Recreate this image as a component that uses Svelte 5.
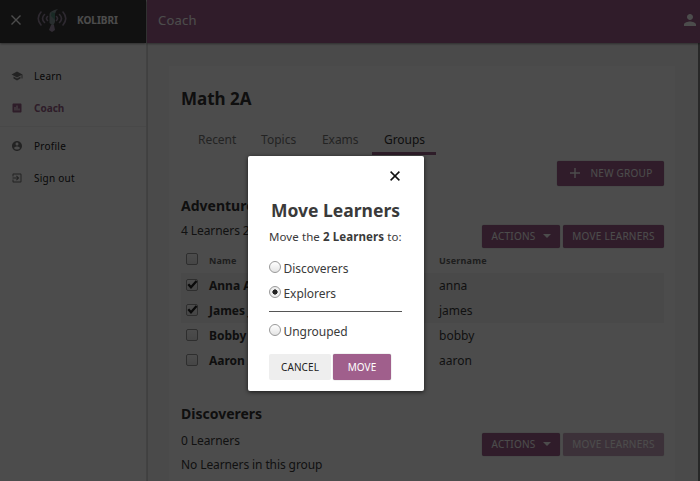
<script>
  const tabs = ['Recent', 'Topics', 'Exams', 'Groups'];
  const learners = [
    { name: 'Anna Adams', username: 'anna', checked: true },
    { name: 'James Jones', username: 'james', checked: true },
    { name: 'Bobby Brown', username: 'bobby', checked: false },
    { name: 'Aaron Allen', username: 'aaron', checked: false }
  ];
  const nav = [
    { label: 'Learn', icon: 'M5 13.18v4L12 21l7-3.82v-4L12 17l-7-3.82zM12 3L1 9l11 6 9-4.91V17h2V9L12 3z' },
    { label: 'Coach', active: true, icon: 'M19 3H5c-1.1 0-2 .9-2 2v14c0 1.1.9 2 2 2h14c1.1 0 2-.9 2-2V5c0-1.1-.9-2-2-2zM9 17H7v-7h2v7zm4 0h-2V7h2v10zm4 0h-2v-4h2v4z' },
    { label: 'Profile', icon: 'M12 2C6.48 2 2 6.48 2 12s4.48 10 10 10 10-4.48 10-10S17.520 2 12 2zm0 3c1.660 0 3 1.340 3 3s-1.340 3-3 3-3-1.340-3-3 1.340-3 3-3zm0 14.200c-2.500 0-4.710-1.280-6-3.220.030-1.990 4-3.080 6-3.080 1.990 0 5.970 1.090 6 3.080-1.290 1.940-3.500 3.220-6 3.220z' },
    { label: 'Sign out', icon: 'M10.090 15.590L11.500 17l5-5-5-5-1.410 1.410L12.670 11H3v2h9.670l-2.580 2.590zM19 3H5c-1.110 0-2 .9-2 2v4h2V5h14v14H5v-4H3v4c0 1.100.890 2 2 2h14c1.100 0 2-.9 2-2V5c0-1.100-.9-2-2-2z' }
  ];
  let target = $state('Explorers');
</script>

{#snippet checkbox(checked)}
  <span class="check">
    {#if checked}
      <svg width="12" height="12" viewBox="0 0 12 12"><path d="M2.300 5.200L5 8.300 10.600 2" fill="none" stroke="#222" stroke-width="2.300" /></svg>
    {/if}
  </span>
{/snippet}

{#snippet actions(disabled)}
  <div class="actions">
    <button class="btn act">ACTIONS<svg width="8" height="4" viewBox="0 0 8 4"><path d="M0 0h8L4 4z" fill="currentColor" /></svg></button>
    <button class="btn mv" class:disabled>MOVE LEARNERS</button>
  </div>
{/snippet}

{#snippet option(name)}
  <button class="option" onclick={() => (target = name)}>
    <span class="radio" class:on={target === name}></span><span class="label">{name}</span>
  </button>
{/snippet}

<div class="app">
  <aside>
    <div class="brand">
      <svg class="close" width="10" height="10" viewBox="0 0 10 10"><path d="M.5.5l9 9M9.500.5l-9 9" stroke="#fff" stroke-width="1.400" /></svg>
      <svg class="logo" width="30" height="24" viewBox="0 0 30 24">
        <g fill="none" stroke="#998aa2" stroke-width="1.600" stroke-linecap="round">
          <path d="M4 4Q-1.500 10.500 4 17M7.500 6.500Q3.500 10.500 7.500 14.500M10.500 8.500Q8.500 10.500 10.500 12.500" />
          <path d="M26 4q5.500 6.500 0 13M22.500 6.500q4 4 0 8M19.500 8.500q2 2 0 4" />
        </g>
        <path d="M12.500 6Q13 3 21 1Q18 3 18 6L18 14L16 18L12.500 15Z" fill="#8a9a9d" />
        <path d="M14.500 4L18 5V12L14 8Z" fill="#568e7c" />
        <path d="M14 17h3l1 5-3 2-3-2z" fill="#a694ae" />
      </svg>
      <span>KOLIBRI</span>
    </div>
    <nav>
      {#each nav as item, i}
        {#if i === 2}<hr />{/if}
        <div class="item" class:active={item.active}>
          <svg width="12" height="12" viewBox="0 0 24 24"><path d={item.icon} fill="currentColor" fill-rule="evenodd" /></svg>
          <span>{item.label}</span>
        </div>
      {/each}
    </nav>
  </aside>

  <div class="main">
    <header>
      <span>Coach</span>
      <svg width="18" height="18" viewBox="0 0 24 24"><path d="M12 12c2.210 0 4-1.790 4-4s-1.790-4-4-4-4 1.790-4 4 1.790 4 4 4zm0 2c-2.670 0-8 1.340-8 4v2h16v-2c0-2.660-5.330-4-8-4z" fill="#fff" /></svg>
    </header>
    <div class="scroll">
      <div class="card">
        <h1>Math 2A</h1>
        <div class="tabs">
          {#each tabs as tab, i}
            <span class={`tab ${tab.toLowerCase()}`} class:current={i === 3}>{tab}</span>
          {/each}
        </div>
        <div class="new-row">
          <button class="btn new"><svg width="10" height="10" viewBox="0 0 10 10"><path d="M0 5h10M5 0v10" stroke="currentColor" stroke-width="1.400" /></svg>NEW GROUP</button>
        </div>
        <section class="group first">
          <div class="info"><h2>Adventurers</h2><p>4 Learners 2 Selected</p></div>
          {@render actions(false)}
        </section>
        <div class="table">
          <div class="row head">{@render checkbox(false)}<span class="name">Name</span><span>Username</span></div>
          {#each learners as l}
            <div class="row" class:selected={l.checked}>{@render checkbox(l.checked)}<span class="name">{l.name}</span><span>{l.username}</span></div>
          {/each}
        </div>
        <section class="group second">
          <div class="info"><h2>Discoverers</h2><p>0 Learners</p></div>
          {@render actions(true)}
        </section>
        <p class="empty">No Learners in this group</p>
      </div>
    </div>
  </div>

  <div class="overlay">
    <div class="modal" role="dialog" aria-modal="true">
      <svg class="dismiss" width="10" height="10" viewBox="0 0 10 10"><path d="M.6.6l8.800 8.800M9.400.6L.6 9.400" stroke="#111" stroke-width="1.500" /></svg>
      <h3>Move Learners</h3>
      <p>Move the <b>2 Learners</b> to:</p>
      {@render option('Discoverers')}
      {@render option('Explorers')}
      <hr />
      {@render option('Ungrouped')}
      <div class="foot">
        <button class="cancel">CANCEL</button>
        <button class="move">MOVE</button>
      </div>
    </div>
  </div>
</div>

<style>
  :global(body) { background: #f9f9f9; }
  * { box-sizing: border-box; }
  h1, h2, h3, p, hr { margin: 0; }
  button { font: inherit; border: 0; padding: 0; white-space: nowrap; }
  .app {
    display: flex;
    position: relative;
    width: 700px;
    height: 481px;
    overflow: hidden;
    font-family: 'Noto Sans', sans-serif;
    font-size: 12px;
    color: #3a3a3a;
  }
  aside { width: 147px; background: #fff; border-right: 1px solid #dcdcdc; box-shadow: 1px 0 0 #d8d8d8; z-index: 1; flex: none; }
  .brand {
    display: flex;
    align-items: center;
    width: 146px;
    height: 43px;
    padding: 0 0 3px 11px;
    background: #3a3a3a;
    color: #fff;
    font-size: 10px;
    font-weight: 700;
    box-shadow: 0 1px 2px #0006;
  }
  .logo { margin: 0 10px 0 16px; }
  nav { padding-top: 17px; }
  nav hr { border: 0; border-top: 1px solid #f0f0f0; margin: 2px 0 3px; }
  .item { display: flex; align-items: center; height: 32px; padding-left: 11px; gap: 11px; font-size: 10px; letter-spacing: 0.25px; }
  .item svg { color: #777; }
  .item span { color: #222; }
  .item.active svg, .item.active span { color: #996189; }
  .item.active span { font-weight: 700; letter-spacing: 0; }
  .main { flex: 1; display: flex; flex-direction: column; min-width: 0; }
  header {
    display: flex;
    align-items: center;
    justify-content: space-between;
    flex: none;
    height: 43px;
    padding: 0 1px 3px 11px;
    background: #a05f8c;
    color: #fff;
    font-size: 13px;
    letter-spacing: 0.2px;
    box-shadow: 0 1px 2px #0006;
    z-index: 1;
  }
  .scroll { flex: 1; min-height: 0; padding: 23px 23px 0 22px; border-right: 2px solid #888; background: #f9f9f9; overflow: hidden; }
  .card { height: 440px; padding: 20px 11px 0 12px; background: #fff; }
  h1 { font-size: 17px; line-height: 26px; color: #333; }
  .tabs { display: flex; margin: 13px 0 0 5px; height: 30px; line-height: 30px; letter-spacing: -0.05px; }
  .tab { flex: none; padding-left: 12px; color: #777; }
  .recent { width: 63px; }
  .topics { width: 61px; letter-spacing: 0.05px; }
  .exams { width: 62px; }
  .groups { width: 64px; }
  .current { border-bottom: 3px solid #996189; color: #333; }
  .new-row { display: flex; justify-content: flex-end; padding-top: 6px; }
  .btn {
    display: flex;
    align-items: center;
    justify-content: center;
    height: 23px;
    padding-bottom: 1px;
    border-radius: 2px;
    background: #a05f8c;
    color: #fff;
    font-size: 10px;
    letter-spacing: 0.25px;
    box-shadow: 0 0 1px #0008;
  }
  .new { width: 107px; height: 25px; padding-left: 1px; gap: 11px; }
  .group { display: flex; justify-content: space-between; }
  .first { height: 61px; padding-top: 10px; }
  .second { height: 83px; padding-top: 31px; }
  h2 { font-size: 14px; line-height: 20px; color: #333; }
  .info p { line-height: 18px; margin-top: 6px; letter-spacing: -0.08px; }
  .info { flex: none; width: 200px; }
  .second .info p { margin-top: 8px; }
  .actions { display: flex; gap: 3px; padding-top: 29px; }
  .act { width: 78px; gap: 7px; }
  .mv { width: 101px; }
  .disabled { opacity: 0.55; }
  .row { display: flex; align-items: center; height: 25px; padding-left: 5px; }
  .head { height: 26px; font-size: 9px; font-weight: 700; letter-spacing: 0.2px; color: #666; }
  .name { width: 230px; font-weight: 700; margin-left: 11px; }
  .row:not(.head) .name { color: #333; }
  .selected { background: #f4f4f4; }
  .check { flex: none; display: block; width: 12px; height: 12px; margin-bottom: 2px; border: 1px solid #999; border-radius: 2px; background: linear-gradient(#fff, #e9e9e9); }
  .check svg { display: block; margin: -1px; }
  .empty { line-height: 18px; letter-spacing: -0.1px; }

  .overlay { position: absolute; inset: 0; z-index: 5; display: flex; justify-content: center; background: rgba(0, 0, 0, 0.7); }
  .modal {
    display: flex;
    flex-direction: column;
    align-items: stretch;
    width: 176px;
    height: 235px;
    margin: 156px 28px 0 0;
    padding: 15px 22px 0 21px;
    border-radius: 2px;
    background: #fff;
    box-shadow: 0 1px 4px #000a;
    flex: none;
  }
  .dismiss { align-self: flex-end; margin-right: 2px; flex: none; }
  h3 { margin-top: 17px; text-align: center; font-size: 17.500px; line-height: 24px; color: #3a3a3a; white-space: nowrap; }
  .modal p { margin: 6px 0 9px; font-size: 11.500px; line-height: 18px; letter-spacing: 0.09px; white-space: nowrap; }
  .option { display: flex; align-items: center; flex: none; height: 25px; gap: 3px; background: none; color: #3a3a3a; letter-spacing: -0.05px; }
  .label { padding-top: 1px; margin-left: -0.5px; }
  .radio { width: 12px; height: 12px; margin-bottom: 2px; border: 1px solid #999; border-radius: 50%; background: linear-gradient(#fff, #e4e4e4); }
  .on { background: radial-gradient(circle, #222 0 2.300px, #eee 2.900px); }
  .modal hr { flex: none; border: 0; border-top: 1px solid #555; margin: 6px 0; }
  .foot { display: flex; gap: 2px; margin-top: 11px; }
  .foot button { height: 26px; border-radius: 2px; font-size: 10px; letter-spacing: 0.1px; }
  .cancel { width: 62px; background: #eee; color: #222; }
  .move { width: 58px; background: #a05f8c; color: #fff; box-shadow: 0 0 1px #0008; }
</style>
